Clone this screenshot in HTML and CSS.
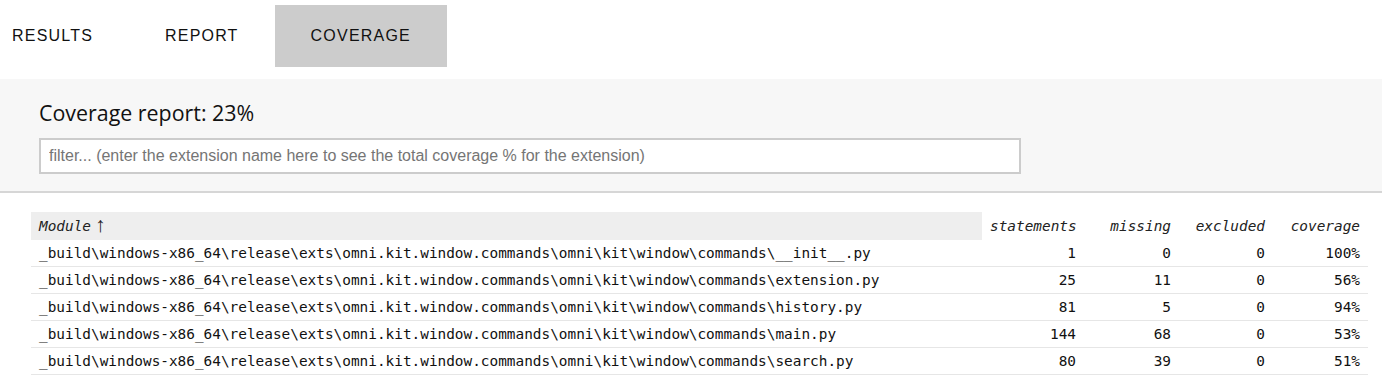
FILE: index.html
```html
<!DOCTYPE html>
<html lang="en">
<head>
    <meta charset="UTF-8">
    <meta name="viewport" content="width=device-width, initial-scale=1.0">
    <title>Coverage</title>
    <link rel="stylesheet" href="styles.css">
</head>
<body>
    <div class="tabs">
        <div class="tab first">Results</div>
        <div class="tab">Report</div>
        <div class="tab active">Coverage</div>
    </div>

    <div class="panel">
        <h2>Coverage report: 23%</h2>
        <input type="text" class="filter" placeholder="filter... (enter the extension name here to see the total coverage % for the extension)">
    </div>

    <table class="coverage">
        <colgroup>
            <col class="col-module">
            <col class="col-stmts">
            <col class="col-missing">
            <col class="col-excluded">
            <col class="col-cov">
        </colgroup>
        <thead>
            <tr>
                <th class="module">Module<span class="arrow">&uarr;</span></th>
                <th class="num">statements</th>
                <th class="num">missing</th>
                <th class="num">excluded</th>
                <th class="num">coverage</th>
            </tr>
        </thead>
        <tbody>
            <tr>
                <td>_build\windows-x86_64\release\exts\omni.kit.window.commands\omni\kit\window\commands\__init__.py</td>
                <td class="num">1</td>
                <td class="num">0</td>
                <td class="num">0</td>
                <td class="num">100%</td>
            </tr>
            <tr>
                <td>_build\windows-x86_64\release\exts\omni.kit.window.commands\omni\kit\window\commands\extension.py</td>
                <td class="num">25</td>
                <td class="num">11</td>
                <td class="num">0</td>
                <td class="num">56%</td>
            </tr>
            <tr>
                <td>_build\windows-x86_64\release\exts\omni.kit.window.commands\omni\kit\window\commands\history.py</td>
                <td class="num">81</td>
                <td class="num">5</td>
                <td class="num">0</td>
                <td class="num">94%</td>
            </tr>
            <tr>
                <td>_build\windows-x86_64\release\exts\omni.kit.window.commands\omni\kit\window\commands\main.py</td>
                <td class="num">144</td>
                <td class="num">68</td>
                <td class="num">0</td>
                <td class="num">53%</td>
            </tr>
            <tr>
                <td>_build\windows-x86_64\release\exts\omni.kit.window.commands\omni\kit\window\commands\search.py</td>
                <td class="num">80</td>
                <td class="num">39</td>
                <td class="num">0</td>
                <td class="num">51%</td>
            </tr>
        </tbody>
    </table>
</body>
</html>
```

FILE: styles.css
```css
body {
    margin: 0;
    font-family: "Liberation Sans", Arial, sans-serif;
    background-color: #fff;
    color: #111;
}
.tabs {
    display: flex;
    margin-top: 5px;
    height: 62px;
}
.tab {
    display: flex;
    align-items: center;
    padding: 0 36px;
    font-size: 16px;
    letter-spacing: 1.2px;
    text-transform: uppercase;
    color: #111;
}
.tab.first {
    padding-left: 12px;
}
.tab.active {
    background-color: #ccc;
}
.panel {
    margin-top: 12px;
    padding: 20px 39px 17px;
    background-color: #f7f7f7;
    border-bottom: 2px solid #d6d6d6;
}
.panel h2 {
    margin: 0 0 11px;
    font-family: "Open Sans", sans-serif;
    font-size: 21.4px;
    font-weight: normal;
    line-height: 28px;
    color: #111;
}
.filter {
    display: block;
    box-sizing: border-box;
    width: 982px;
    height: 36px;
    padding: 0 8px;
    border: 2px solid #ccc;
    background-color: #fff;
    font-family: "Liberation Sans", Arial, sans-serif;
    font-size: 16px;
}
.filter::placeholder {
    color: #757575;
}
.coverage {
    margin: 19px 0 0 31px;
    width: 1337px;
    table-layout: fixed;
    border-collapse: collapse;
    font-family: "DejaVu Sans Mono", monospace;
    font-size: 14.4px;
}
.col-module {
    width: 951px;
}
.col-stmts {
    width: 102px;
}
.col-missing {
    width: 95px;
}
.col-excluded {
    width: 94px;
}
.col-cov {
    width: 95px;
}
.coverage th {
    height: 28px;
    padding: 0 8px;
    font-weight: normal;
    font-style: italic;
    text-align: left;
    color: #222;
}
.coverage th.module {
    background-color: #eee;
}
.coverage .arrow {
    margin-left: 4px;
    font-family: "Liberation Sans", sans-serif;
    font-style: normal;
    font-size: 21px;
    line-height: 0;
    vertical-align: -1px;
}
.coverage td {
    height: 26px;
    padding: 0 8px;
    border-bottom: 1px solid #e6e6e6;
    white-space: nowrap;
}
.coverage .num {
    text-align: right;
}
```
